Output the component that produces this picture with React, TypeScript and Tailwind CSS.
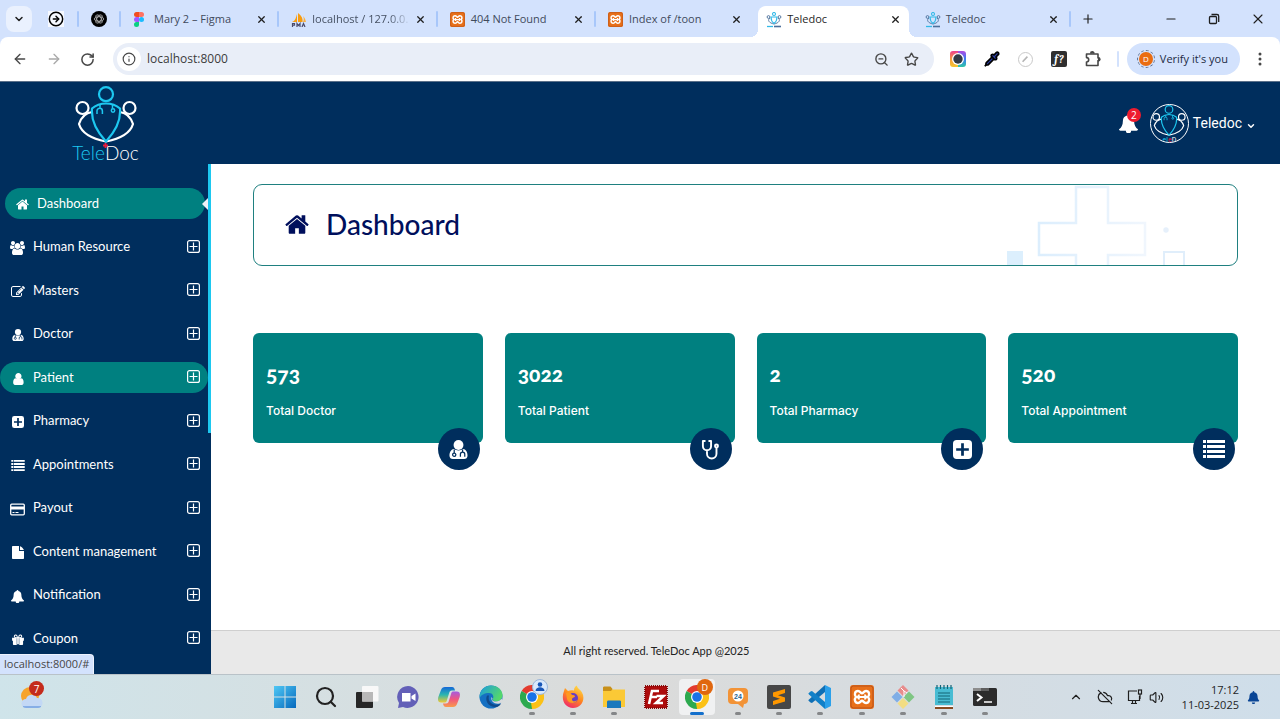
import React from "react";
import {
  ArrowLeft, ArrowRight, ChevronDown, ChevronUp, CircleArrowRight, CloudOff, Info, Minus, Plus,
  RotateCw, Search, Star, Volume2, X, ZoomOut, Pipette,
} from "lucide-react";
import { FaBell } from "react-icons/fa";

type IconProps = { className?: string };

/* ---------- dashboard icons ---------- */

const HomeIcon = ({ className }: IconProps) => (
  <svg viewBox="64 200 1664 1400" fill="currentColor" className={className} aria-hidden="true">
    <path d="M1472 992v480q0 26-19 45t-45 19h-384v-384h-256v384h-384q-26 0-45-19t-19-45v-480q0-1 .5-3t.5-3l575-474 575 474q1 2 1 6zm223-69l-62 74q-8 9-21 11h-3q-13 0-21-7l-692-577-692 577q-12 8-24 7-13-2-21-11l-62-74q-8-10-7-23.500t11-21.500l719-599q32-26 76-26t76 26l244 204v-195q0-14 9-23t23-9h192q14 0 23 9t9 23v408l219 182q10 8 11 21.500t-7 23.500z" />
  </svg>
);

const UsersIcon = ({ className }: IconProps) => (
  <svg viewBox="0 0 1920 1792" fill="currentColor" className={className} aria-hidden="true">
    <path d="M593 896q-162 5-265 128h-134q-82 0-138-40.500t-56-118.500q0-353 124-353 6 0 43.500 21t97.500 42.500 119 21.500q67 0 133-23-5 37-5 66 0 139 81 256zm1071 637q0 120-73 189.500t-194 69.500h-874q-121 0-194-69.500t-73-189.500q0-53 3.500-103.500t14-109 26.500-108.500 43-97.500 62-81 85.500-53.500 111.500-20q10 0 43 21.500t73 48 107 48 135 21.500 135-21.500 107-48 73-48 43-21.500q61 0 111.500 20t85.500 53.500 62 81 43 97.500 26.500 108.500 14 109 3.500 103.500zm-1024-1277q0 106-75 181t-181 75-181-75-75-181 75-181 181-75 181 75 75 181zm704 384q0 159-112.500 271.500t-271.500 112.500-271.500-112.500-112.500-271.500 112.500-271.500 271.500-112.500 271.500 112.500 112.500 271.500zm576 225q0 78-56 118.500t-138 40.500h-134q-103-123-265-128 81-117 81-256 0-29-5-66 66 23 133 23 59 0 119-21.500t97.500-42.500 43.500-21q124 0 124 353zm-128-609q0 106-75 181t-181 75-181-75-75-181 75-181 181-75 181 75 75 181z" />
  </svg>
);

const EditIcon = ({ className }: IconProps) => (
  <svg viewBox="0 0 1792 1792" fill="currentColor" className={className} aria-hidden="true">
    <path d="M888 1184l116-116-152-152-116 116v56h96v96h56zm440-720q-16-16-33 1l-350 350q-17 17-1 33t33-1l350-350q17-17 1-33zm80 594v190q0 119-84.500 203.500t-203.500 84.500h-832q-119 0-203.500-84.500t-84.500-203.500v-832q0-119 84.500-203.500t203.500-84.500h832q63 0 117 25 15 7 18 23 3 17-9 29l-49 49q-14 14-32 8-23-6-45-6h-832q-66 0-113 47t-47 113v832q0 66 47 113t113 47h832q66 0 113-47t47-113v-126q0-13 9-22l64-64q15-15 35-7t20 29zm-96-738l288 288-672 672h-288v-288zm444 132l-92 92-288-288 92-92q28-28 68-28t68 28l152 152q28 28 28 68t-28 68z" />
  </svg>
);

const UserIcon = ({ className }: IconProps) => (
  <svg viewBox="128 192 1440 1472" fill="currentColor" className={className} aria-hidden="true">
    <path d="M1536 1399q0 109-62.500 187t-150.500 78h-854q-88 0-150.500-78t-62.500-187q0-85 8.500-160.500t31.500-152 58.500-131 94-89 134.500-34.500q131 128 313 128t313-128q76 0 134.500 34.500t94 89 58.500 131 31.500 152 8.500 160.500zm-256-823q0 159-112.500 271.500t-271.500 112.500-271.500-112.500-112.500-271.500 112.500-271.500 271.500-112.500 271.500 112.500 112.500 271.500z" />
  </svg>
);

const DoctorIcon = ({ className }: IconProps) => (
  <svg viewBox="0 0 20 20" className={className} aria-hidden="true">
    <path d="M5 9.500C2 10 .5 13 .5 16.500.5 18.600 2 20 4 20h12c2 0 3.500-1.400 3.500-3.500 0-3.500-1.500-6.500-4.500-7-3 2-7 2-10 0z" fill="currentColor" />
    <circle cx="10" cy="5.200" r="5.200" fill="currentColor" />
    <circle cx="5.500" cy="15.500" r="1.700" fill="none" stroke="#002e5d" strokeWidth="1.300" />
    <path d="M5.500 13.800V10M14.300 10v2.500M12 17.500V15a2.300 2.300 0 0 1 4.600 0v2.500" fill="none" stroke="#002e5d" strokeWidth="1.300" />
  </svg>
);

const PlusSquareIcon = ({ className }: IconProps) => (
  <svg viewBox="0 0 18 18" className={className} aria-hidden="true">
    <path fillRule="evenodd" fill="currentColor" d="M3.500 0h11A3.500 3.500 0 0 1 18 3.500v11a3.500 3.500 0 0 1-3.500 3.500h-11A3.500 3.500 0 0 1 0 14.500v-11A3.500 3.500 0 0 1 3.500 0zM7.700 3v4.700H3v2.600h4.700V15h2.600v-4.700H15V7.700h-4.700V3z" />
  </svg>
);

const ListIcon = ({ className }: IconProps) => (
  <svg viewBox="0 0 22 18" fill="currentColor" className={className} aria-hidden="true">
    <path d="M0 0h3v3H0zM4 0h18v3H4zM0 5h3v3H0zM4 5h18v3H4zM0 10h3v3H0zM4 10h18v3H4zM0 15h3v3H0zM4 15h18v3H4z" />
  </svg>
);

const CardIcon = ({ className }: IconProps) => (
  <svg viewBox="0 0 15 13" className={className} aria-hidden="true">
    <rect x=".7" y="1.200" width="13.600" height="10.600" rx="1" fill="none" stroke="currentColor" strokeWidth="1.300" />
    <path d="M1 3.500h13v3H1zM2.500 9h2v1h-2zM5.500 9h3v1h-3z" fill="currentColor" />
  </svg>
);

const FileIcon = ({ className }: IconProps) => (
  <svg viewBox="0 0 12 13" fill="currentColor" className={className} aria-hidden="true">
    <path d="M.8 0H7v5h5v7.200c0 .5-.3.8-.8.8H.8c-.5 0-.8-.3-.8-.8V.8C0 .3.300 0 .8 0zM8 .2c1.500.5 3.500 2.300 3.900 3.800H8z" />
  </svg>
);

const BellIcon = ({ className }: IconProps) => (
  <svg viewBox="0 0 18 18" fill="currentColor" className={className} aria-hidden="true">
    <path d="M9 0c.8 0 1.300.5 1.300 1.400 2.400.5 4 2.500 4 4.900 0 4.200 1.400 6.500 3.700 8.200 0 .8-.6 1.300-1.300 1.300h-5.200a2.500 2.500 0 0 1-5 0H1.300C.6 15.800 0 15.300 0 14.500c2.300-1.700 3.700-4 3.700-8.200 0-2.400 1.600-4.400 4-4.900C7.700.5 8.200 0 9 0z" />
  </svg>
);

const GiftIcon = ({ className }: IconProps) => (
  <svg viewBox="0 0 14 13" className={className} aria-hidden="true">
    <path d="M0 4.500h5.500V8H0zM8.500 4.500H14V8H8.500zM1 8h4.500v5H2c-.6 0-1-.4-1-1zM8.500 8H13v4c0 .6-.4 1-1 1H8.500zM6 4.500h2V12H6z" fill="currentColor" />
    <path d="M6.500 4.300H4.200a1.600 1.600 0 1 1 1.300-2.600zM7.500 4.300h2.300a1.600 1.600 0 1 0-1.300-2.600z" fill="none" stroke="currentColor" strokeWidth="1.200" />
  </svg>
);

const StethoscopeIcon = ({ className }: IconProps) => (
  <svg viewBox="0 0 20 22" className={className} fill="none" stroke="currentColor" strokeWidth="2" strokeLinecap="round" strokeLinejoin="round" aria-hidden="true">
    <path d="M4 2H2v5.500a4.300 4.300 0 0 0 8.600 0V2h-2M6.300 12v3.500a5 5 0 0 0 10 0V9" />
    <circle cx="16.300" cy="7.300" r="1.600" />
  </svg>
);

const ExpandIcon = ({ className }: IconProps) => (
  <svg viewBox="0 0 13 13" className={className} fill="none" stroke="currentColor" aria-hidden="true">
    <rect x=".6" y=".6" width="11.800" height="11.800" rx="2" strokeWidth="1.200" />
    <path d="M6.500 2.500v8M2.500 6.500h8" strokeWidth="1.200" />
  </svg>
);

const LogoMark = ({ className, side = "#fff" }: IconProps & { side?: string }) => (
  <svg viewBox="0 0 62 57" className={className} fill="none" strokeWidth="2.200" aria-hidden="true">
    <g stroke={side}>
      <circle cx="7.500" cy="22" r="6" />
      <circle cx="54.500" cy="22" r="6" />
      <path d="M17 26C10 27 6 32 4 38c3 10 14 15 27 17.500C44 53 55 48 58 38c-2-6-6-11-13-12" />
    </g>
    <g stroke="#1dc8f0">
      <circle cx="31" cy="8.200" r="7" />
      <path d="M31 17.500c6 0 10 1.500 14 5C46 34 40 46 31 55.500 22 46 16 34 17 22.500c4-3.500 8-5 14-5z" />
      <path d="M25 18.500v4M22 28v-3a2.700 2.700 0 0 1 5.400 0v3M37.500 18.500v4" strokeWidth="1.500" />
      <circle cx="38" cy="24.500" r="1.700" strokeWidth="1.500" />
    </g>
  </svg>
);

/* ---------- browser icons ---------- */

const FigmaIcon = () => (
  <svg viewBox="0 0 12 18" className="h-[15px] w-3" aria-hidden="true">
    <path d="M3 0h3v6H3a3 3 0 0 1 0-6z" fill="#f24e1e" />
    <path d="M6 0h3a3 3 0 0 1 0 6H6z" fill="#ff7262" />
    <path d="M3 6h3v6H3a3 3 0 0 1 0-6z" fill="#a259ff" />
    <circle cx="9" cy="9" r="3" fill="#1abcfe" />
    <path d="M3 12h3v3a3 3 0 1 1-3-3z" fill="#0acf83" />
  </svg>
);

const PmaIcon = () => (
  <svg viewBox="0 0 16 14" className="h-[14px] w-4" aria-hidden="true">
    <path d="M6 1v8H1c3-1 4-4 5-8zM7 0c4 3 5 6 4.500 9H7z" fill="#f89c0e" />
    <path d="M12 3c1 2 1 4 0 6h3c-.5-2-1-4-3-6z" fill="#fbb040" />
    <path d="M1.500 14v-3.500h2v1.700h-2M6 14v-3.500l1.500 2 1.500-2V14M11 14l1.500-3.500L14 14" stroke="#4b4b6b" strokeWidth="1.200" fill="none" />
  </svg>
);

const XamppIcon = ({ className }: IconProps) => (
  <svg viewBox="0 0 24 24" className={className} aria-hidden="true">
    <rect width="24" height="24" rx="3" fill="#e8701a" />
    <rect x="1" y="1" width="22" height="22" rx="2.500" fill="none" stroke="#b9531a" strokeWidth="1" />
    <path d="M9 9.500c0 1.400-.5 2-1.500 2.500 1 .5 1.500 1.200 1.500 2.500M15 9.500c0 1.400.5 2 1.500 2.500-1 .5-1.500 1.200-1.500 2.500M9 12h6" stroke="#fff" strokeWidth="2" fill="none" />
    <path d="M6 12C3.800 9.500 5 6 8 6c2.500 0 2.500 2.300 4 2.300S13.500 6 16 6c3 0 4.200 3.500 2 6 2.200 2.500 1 6-2 6-2.500 0-2.500-2.300-4-2.300S10.500 18 8 18c-3 0-4.200-3.500-2-6z" fill="none" stroke="#fff" strokeWidth="2.400" />
  </svg>
);

const TeledocFavicon = () => (
  <svg viewBox="0 0 16 16" className="size-4" fill="none" aria-hidden="true">
    <g stroke="#4b6f9b" strokeWidth=".9">
      <circle cx="2.500" cy="5" r="1.400" />
      <circle cx="13.500" cy="5" r="1.400" />
      <path d="M4 6C1 8 3 11 8 12c5-1 7-4 4-6" />
    </g>
    <g stroke="#31b9e8" strokeWidth="1.100">
      <circle cx="8" cy="2" r="1.500" />
      <path d="M5 5h6c0 3-1 5-3 6.500C6 10 5 8 5 5z" />
      <path d="M1 14.500h6" strokeWidth="1.300" />
    </g>
    <path d="M8 14.500h7" stroke="#4b6f9b" strokeWidth="1.600" />
  </svg>
);

const OpenAiIcon = () => (
  <svg viewBox="0 0 16 16" className="size-4" aria-hidden="true">
    <circle cx="8" cy="8" r="8" fill="#000" />
    <g fill="none" stroke="#bbb" strokeWidth=".8">
      <ellipse cx="8" cy="8" rx="4.700" ry="2.200" />
      <ellipse cx="8" cy="8" rx="4.700" ry="2.200" transform="rotate(60 8 8)" />
      <ellipse cx="8" cy="8" rx="4.700" ry="2.200" transform="rotate(120 8 8)" />
    </g>
  </svg>
);

const RestoreIcon = () => (
  <svg viewBox="0 0 12 12" className="size-3" fill="none" stroke="currentColor" strokeWidth="1.300" aria-hidden="true">
    <rect x="1.500" y="3.500" width="7" height="7" rx="1" />
    <path d="M3.500 1.500H9A1.700 1.700 0 0 1 10.700 3.200V9" />
  </svg>
);

const ExtensionsIcon = () => (
  <svg viewBox="0 0 16 16" className="size-4" fill="none" stroke="currentColor" strokeWidth="1.600" strokeLinejoin="round" aria-hidden="true">
    <path d="M1.500 3H13v4h.500a1.300 1.300 0 0 1 0 2.600H13V14.500H1.500V11a2.200 2.200 0 0 0 0-4.400z" />
    <path d="M5.700 2.500a1.600 1.600 0 0 1 3.200 0M13 6.800a1.500 1.500 0 0 1 0 3" fill="currentColor" />
  </svg>
);

/* ---------- taskbar icons ---------- */

const TASK = "size-6";

const ChromeIcon = () => (
  <svg viewBox="0 0 24 24" className={TASK} aria-hidden="true">
    <path d="M12 12L1.600 6A12 12 0 0 1 22.400 6z" fill="#e33b2e" />
    <path d="M12 12L22.400 6A12 12 0 0 1 12 24z" fill="#fbc116" />
    <path d="M12 12v12A12 12 0 0 1 1.600 6z" fill="#2da94f" />
    <path d="M12 6h10.400L17 9z" fill="#e33b2e" />
    <path d="M17.200 15L12 24l-1-6.500z" fill="#fbc116" />
    <circle cx="12" cy="12" r="6" fill="#fff" />
    <circle cx="12" cy="12" r="4.800" fill="#1a73e8" />
  </svg>
);

const WindowsIcon = () => (
  <svg viewBox="0 0 24 24" className={TASK} aria-hidden="true">
    <defs>
      <linearGradient id="win" x1="0" y1="0" x2="1" y2="1">
        <stop stopColor="#4fc8f5" />
        <stop offset="1" stopColor="#0669bd" />
      </linearGradient>
    </defs>
    <path d="M1 1h10.500v10.500H1zM12.500 1H23v10.500H12.500zM1 12.500h10.500V23H1zM12.500 12.500H23V23H12.500z" fill="url(#win)" />
  </svg>
);

const SearchIcon = () => <Search className="size-6 text-[#222]" strokeWidth={2.2} />;

const TaskViewIcon = () => (
  <svg viewBox="0 0 24 24" className={TASK} aria-hidden="true">
    <rect x="1" y="7" width="17" height="16" rx="1" fill="#262626" />
    <rect x="7" y="1" width="16.500" height="15.500" rx="1" fill="#f8f8f8" />
    <path d="M7 7h11v9.500H7z" fill="#b8b8b8" />
  </svg>
);

const ChatIcon = () => (
  <svg viewBox="0 0 24 24" className={TASK} aria-hidden="true">
    <path d="M12 1a11 11 0 1 1-5 21l-5 1 1-5A11 11 0 0 1 12 1z" fill="#6360b8" />
    <path d="M6 8h8.500v8.500H6zM15.500 11l4-2.500v7.500l-4-2.500z" fill="#fff" />
  </svg>
);

const CopilotIcon = () => (
  <svg viewBox="0 0 24 24" className={TASK} aria-hidden="true">
    <defs>
      <linearGradient id="copA" x1="0" y1="0" x2="0" y2="1">
        <stop stopColor="#1468d8" />
        <stop offset=".5" stopColor="#2bb6b0" />
        <stop offset="1" stopColor="#f2c932" />
      </linearGradient>
      <linearGradient id="copB" x1="0" y1="0" x2="0" y2="1">
        <stop stopColor="#a45be0" />
        <stop offset=".5" stopColor="#f0567f" />
        <stop offset="1" stopColor="#f99b4b" />
      </linearGradient>
    </defs>
    <path d="M8 2h7c2 0 2.500 1.500 3 3.500h-3c-2 0-2.500 1-3 3L10 15c-.5 2-1 2.500-3 2.500H4c-3 0-3.500-3-2.500-6L4 5c.7-2 2-3 4-3z" fill="url(#copA)" />
    <path d="M16 22H9c-2 0-2.500-1.500-3-3.500h3c2 0 2.500-1 3-3L14 9c.5-2 1-2.500 3-2.500h3c3 0 3.500 3 2.500 6L20 19c-.7 2-2 3-4 3z" fill="url(#copB)" />
  </svg>
);

const EdgeIcon = () => (
  <svg viewBox="0 0 24 24" className={TASK} aria-hidden="true">
    <defs>
      <linearGradient id="edgA" x1="0" y1="0" x2="1" y2=".5">
        <stop stopColor="#1b9be0" />
        <stop offset="1" stopColor="#55d86a" />
      </linearGradient>
    </defs>
    <circle cx="12" cy="12" r="11.500" fill="#1570c2" />
    <path d="M.6 11C1.500 4.500 6 .5 12 .5c7 0 11.500 5 11.500 9.500 0 4-3 6.500-6.500 6.500-3 0-4-1.500-3-3 1-2 0-5.500-4-5.500C5.500 8 2 10 .6 13z" fill="url(#edgA)" />
    <path d="M8 10.500c-2 4 0 11.500 9 11.500 2 0 4-1.500 5-3.500-7 3.500-14-1-12-8z" fill="#114a8b" />
    <path d="M13.500 13.500c-1 1.500 0 3 3.500 3 2 0 4.500-1 5.700-3L23.500 17l-3 1.500c-5 1-9-2-8-6.500z" fill="#d9dbdd" />
  </svg>
);

const FirefoxIcon = () => (
  <svg viewBox="0 0 24 24" className={TASK} aria-hidden="true">
    <defs>
      <linearGradient id="ffx" x1=".8" y1="0" x2=".3" y2="1">
        <stop stopColor="#ffe14a" />
        <stop offset=".5" stopColor="#ff8a1e" />
        <stop offset="1" stopColor="#f0286b" />
      </linearGradient>
    </defs>
    <path d="M3 6l1-3 3 3c2-1 4-1 6-.5C13 3 14 1.500 16 .5c0 3 3 3.500 5 7 4 7-1 15.500-9 15.500S-.5 15 3 6z" fill="url(#ffx)" />
    <circle cx="12" cy="13" r="5" fill="#6a3fc0" />
    <path d="M5 8c3-1 5 0 6 2 2 0 3 .5 3 1.500-1 1.500-3 1-3 3s3 2.500 5 .5c-1 4-9 4-10-1z" fill="#ff9a20" />
  </svg>
);

const FolderIcon = () => (
  <svg viewBox="0 0 24 24" className={TASK} aria-hidden="true">
    <path d="M1 2h7l2.500 2.500H23V22H1z" fill="#fbc936" />
    <path d="M1 3c0-1 .5-1.500 1.500-1.500h6L10.500 4 9 6H1z" fill="#c8901a" />
    <path d="M5 23v-6c0-1 .5-1.500 1.500-1.500h11c1 0 1.500.5 1.500 1.500v6z" fill="#1a78bd" />
  </svg>
);

const FilezillaIcon = () => (
  <svg viewBox="0 0 24 24" className={TASK} aria-hidden="true">
    <rect x="1" y="1" width="22" height="22" fill="#ad0b0b" stroke="#8a0a0a" strokeWidth="2" strokeDasharray="1 1" />
    <path d="M5 19L8 6h7M7 12h6M12.500 11h7L12 18h7" fill="none" stroke="#fff" strokeWidth="2.600" />
  </svg>
);

const Chat24Icon = () => (
  <svg viewBox="0 0 24 24" className={TASK} aria-hidden="true">
    <path d="M6 3h12a4 4 0 0 1 4 4v8a4 4 0 0 1-4 4l-1 4-5-4H6a4 4 0 0 1-4-4V7a4 4 0 0 1 4-4z" fill="#f29337" />
    <circle cx="12" cy="11" r="5.500" fill="#fff" />
    <text x="12" y="13.500" textAnchor="middle" fontFamily="Liberation Sans, sans-serif" fontSize="7" fontWeight="700" fill="#27628f">24</text>
  </svg>
);

const SublimeIcon = () => (
  <svg viewBox="0 0 24 24" className={TASK} aria-hidden="true">
    <rect width="24" height="24" rx="2" fill="#474747" />
    <path d="M18 4v4l-7 2.200 7 2.300v4L6 20v-4l7-2.200-7-2.300v-4z" fill="#ff9800" />
  </svg>
);

const VsCodeIcon = () => (
  <svg viewBox="0 0 24 24" className={TASK} aria-hidden="true">
    <path d="M17 0v7L4 18l-1.500-.5L.3 15.500 1 14.500z" fill="#0f6fb5" />
    <path d="M17 24v-7L4 6l-1.500.5L.3 8.500 1 9.500z" fill="#1180c8" />
    <path d="M17 0l6 3v18l-6 3z" fill="#2ba0ea" />
  </svg>
);

const GitIcon = () => (
  <svg viewBox="0 0 24 24" className={TASK} aria-hidden="true">
    <path d="M12 0l5.500 5.500L12 11 6.500 5.500z" fill="#e88c8c" />
    <path d="M6 6.500l5.500 5.500L6 17.500.5 12z" fill="#80aee6" />
    <path d="M18 6.500l5.500 5.500-5.500 5.500-5.500-5.500z" fill="#7fc683" />
    <path d="M12 13l5.500 5.500L12 24l-5.500-5.500z" fill="#f2dd83" />
    <path d="M10 3l3 3v6M13 6l3 2" stroke="#fff" strokeWidth="1" fill="none" />
  </svg>
);

const NotepadIcon = () => (
  <svg viewBox="0 0 24 24" className={TASK} aria-hidden="true">
    <path d="M3 2h18v18H3z" fill="#48bcd3" />
    <path d="M3 21h18v1H3z" fill="#fff" />
    <path d="M3 22h18v2H3z" fill="#874b22" />
    <path d="M6 8h12M6 11h12M6 14h12M6 17h12" stroke="#136477" strokeWidth="1.200" />
    <path d="M5 0v4M8.500 0v4M12 0v4M15.500 0v4M19 0v4" stroke="#136477" strokeWidth="1.200" />
  </svg>
);

const TerminalIcon = () => (
  <svg viewBox="0 0 24 24" className={TASK} aria-hidden="true">
    <rect y="3" width="24" height="18" rx="1.500" fill="#2c2c2c" />
    <path d="M0 6V4.500C0 3.500.5 3 1.500 3H8v3z" fill="#8d8d8d" />
    <path d="M8 3h8v3H8z" fill="#5f5f5f" />
    <path d="M4 9l4.500 3.500L4 16" stroke="#fff" strokeWidth="2" fill="none" />
    <path d="M11 17h8" stroke="#fff" strokeWidth="1.500" />
  </svg>
);

/* ---------- data ---------- */

const tabs = [
  { title: "Mary 2 – Figma", icon: <FigmaIcon /> },
  { title: "localhost / 127.0.0.", icon: <PmaIcon />, faded: true },
  { title: "404 Not Found", icon: <XamppIcon className="size-[15px]" /> },
  { title: "Index of /toon", icon: <XamppIcon className="size-[15px]" /> },
  { title: "Teledoc", icon: <TeledocFavicon />, active: true },
  { title: "Teledoc", icon: <TeledocFavicon /> },
];

const menu = [
  { label: "Human Resource", icon: <UsersIcon className="h-[14px] w-[15px]" /> },
  { label: "Masters", icon: <EditIcon className="size-[14px]" /> },
  { label: "Doctor", icon: <DoctorIcon className="size-3" /> },
  { label: "Patient", icon: <UserIcon className="size-3" />, hovered: true },
  { label: "Pharmacy", icon: <PlusSquareIcon className="size-3" /> },
  { label: "Appointments", icon: <ListIcon className="h-[11px] w-[14px]" /> },
  { label: "Payout", icon: <CardIcon className="h-[13px] w-[15px]" /> },
  { label: "Content management", icon: <FileIcon className="h-[13px] w-3" /> },
  { label: "Notification", icon: <BellIcon className="size-[13px]" /> },
  { label: "Coupon", icon: <GiftIcon className="h-[11px] w-3" /> },
];

const stats = [
  { value: "573", label: "Total Doctor", icon: <DoctorIcon className="size-[19px]" /> },
  { value: "3022", label: "Total Patient", icon: <StethoscopeIcon className="h-[21px] w-[19px]" /> },
  { value: "2", label: "Total Pharmacy", icon: <PlusSquareIcon className="size-[19px]" /> },
  { value: "520", label: "Total Appointment", icon: <ListIcon className="h-[18px] w-[22px]" /> },
];

const apps: { name: string; icon: React.ReactNode; state?: "running" | "active" }[] = [
  { name: "Start", icon: <WindowsIcon /> },
  { name: "Search", icon: <SearchIcon /> },
  { name: "Task view", icon: <TaskViewIcon /> },
  { name: "Chat", icon: <ChatIcon /> },
  { name: "Copilot", icon: <CopilotIcon /> },
  { name: "Edge", icon: <EdgeIcon /> },
  {
    name: "Chrome",
    state: "running",
    icon: (
      <>
        <ChromeIcon />
        <svg viewBox="0 0 16 16" className="absolute top-0 left-[18px] size-4" aria-hidden="true">
          <circle cx="8" cy="8" r="7.500" fill="#d9e8fb" stroke="#9bb5d8" />
          <circle cx="8" cy="5.500" r="2.300" fill="#1856b8" />
          <path d="M3.500 12c0-5 9-5 9 0z" fill="#1856b8" />
        </svg>
      </>
    ),
  },
  { name: "Firefox", icon: <FirefoxIcon />, state: "running" },
  { name: "File Explorer", icon: <FolderIcon />, state: "running" },
  { name: "FileZilla", icon: <FilezillaIcon /> },
  {
    name: "Chrome, profile D",
    state: "active",
    icon: (
      <>
        <ChromeIcon />
        <span className="absolute top-0 left-[18px] flex size-4 items-center justify-center rounded-full bg-[#e0670f] text-[9px] leading-none text-white">D</span>
      </>
    ),
  },
  { name: "Messenger", icon: <Chat24Icon />, state: "running" },
  { name: "Sublime Text", icon: <SublimeIcon />, state: "running" },
  { name: "Visual Studio Code", icon: <VsCodeIcon />, state: "running" },
  { name: "XAMPP", icon: <XamppIcon className={TASK} />, state: "running" },
  { name: "Git", icon: <GitIcon />, state: "running" },
  { name: "Notepad", icon: <NotepadIcon />, state: "running" },
  { name: "Terminal", icon: <TerminalIcon />, state: "running" },
];

/* ---------- browser chrome ---------- */

function TabStrip() {
  return (
    <div className="flex h-[37px] shrink-0 items-stretch bg-[#d3e2fd] text-[#3f4a5c]">
      <div className="flex w-[121px] items-center">
        <button aria-label="Search tabs" className="ml-1.5 flex size-[26px] items-center justify-center rounded-lg bg-[#eaf1fe] text-[#1f1f1f]">
          <ChevronDown className="size-3" strokeWidth={3} />
        </button>
        <button aria-label="Pinned tab" className="ml-4 bg-white/80 text-black">
          <CircleArrowRight className="size-4" strokeWidth={2.2} />
        </button>
        <span className="ml-[13px] h-4 w-0.5 rounded bg-[#a8c7fa]" />
        <button aria-label="ChatGPT" className="ml-3">
          <OpenAiIcon />
        </button>
        <span className="ml-3 h-4 w-0.5 rounded bg-[#a8c7fa]" />
      </div>
      <div className="flex min-w-0 flex-1">
        {tabs.map((tab, i) => (
          <div key={i} className="relative flex min-w-0 flex-1 items-center pt-0.5 pr-3 pl-3">
            {tab.active && (
              <>
                <span className="absolute inset-x-1 top-1.5 bottom-0 rounded-t-lg bg-white" />
                <span className="absolute bottom-0 -left-1 size-2 bg-[radial-gradient(circle_at_0_0,transparent_8px,white_8px)]" />
                <span className="absolute -right-1 bottom-0 size-2 bg-[radial-gradient(circle_at_100%_0,transparent_8px,white_8px)]" />
              </>
            )}
            <a href="#" className={`relative flex min-w-0 flex-1 items-center ${tab.active ? "text-[#1f1f1f]" : ""}`}>
              <span className="flex w-4 shrink-0 items-center">{tab.icon}</span>
              <span className={`ml-[5px] text-[11px] whitespace-nowrap ${tab.faded ? "bg-linear-to-r from-[#3f4a5c] from-80% to-[#c3d0e8] bg-clip-text text-transparent" : ""}`}>
                {tab.title}
              </span>
            </a>
            <button aria-label={`Close ${tab.title}`} className="relative shrink-0 text-[#1f1f1f]">
              <X className="size-[11px]" strokeWidth={2.8} />
            </button>
            {!tab.active && i !== 3 && <span className="absolute top-[11px] right-0 h-4 w-0.5 rounded bg-[#a8c7fa]" />}
          </div>
        ))}
      </div>
      <div className="flex w-[209px] items-center pt-px text-[#1f1f1f]">
        <button aria-label="New tab" className="ml-2.5"><Plus className="size-[14px]" strokeWidth={2} /></button>
        <div className="mr-3.5 ml-auto flex items-center gap-[30px]">
          <button aria-label="Minimize"><Minus className="size-[14px]" strokeWidth={1.8} /></button>
          <button aria-label="Restore"><RestoreIcon /></button>
          <button aria-label="Close window"><X className="size-4" strokeWidth={1.6} /></button>
        </div>
      </div>
    </div>
  );
}

function Toolbar() {
  return (
    <div className="shrink-0 bg-[#d3e2fd]">
      <div className="flex h-[45px] items-center rounded-t-lg border-b border-[#5b7089] bg-white text-[#474747]">
        <div className="flex w-[113px] items-center gap-[18px] pl-3">
          <button aria-label="Back"><ArrowLeft className="size-4" strokeWidth={2} /></button>
          <button aria-label="Forward" className="text-[#a9a9a9]"><ArrowRight className="size-4" strokeWidth={2} /></button>
          <button aria-label="Reload"><RotateCw className="size-[15px]" strokeWidth={2.4} /></button>
        </div>
        <div className="flex h-8 min-w-0 flex-1 items-center rounded-full bg-[#e9eef8] pr-[15px] pl-1">
          <button aria-label="Site information" className="flex size-6 items-center justify-center rounded-full bg-white">
            <Info className="size-[14px]" strokeWidth={2} />
          </button>
          <input aria-label="Address" defaultValue="localhost:8000" className="ml-1.5 min-w-0 flex-1 bg-transparent text-xs text-[#3c3c3c] outline-none" />
          <button aria-label="Zoom"><ZoomOut className="size-[15px]" strokeWidth={2.2} /></button>
          <button aria-label="Bookmark" className="ml-[15px]"><Star className="size-[15px]" strokeWidth={2.2} /></button>
        </div>
        <div className="ml-4 flex items-center gap-[18px]">
          <button aria-label="Camera extension">
            <svg viewBox="0 0 16 16" className="size-4" aria-hidden="true">
              <defs>
                <linearGradient id="cam" x1="0" y1="0" x2="0" y2="1">
                  <stop stopColor="#ef3f8f" /><stop offset=".5" stopColor="#f59a3c" /><stop offset="1" stopColor="#f7c531" />
                </linearGradient>
                <linearGradient id="camRight" x1="0" y1="0" x2="0" y2="1">
                  <stop stopColor="#b04be0" /><stop offset=".5" stopColor="#3a7cf4" /><stop offset="1" stopColor="#2fc6a4" />
                </linearGradient>
              </defs>
              <path d="M3 0h5v16H3a3 3 0 0 1-3-3V3a3 3 0 0 1 3-3z" fill="url(#cam)" />
              <path d="M8 0h5a3 3 0 0 1 3 3v10a3 3 0 0 1-3 3H8z" fill="url(#camRight)" />
              <circle cx="8" cy="8" r="6" fill="#fff" />
              <circle cx="8" cy="8" r="4.700" fill="#333a45" />
            </svg>
          </button>
          <button aria-label="Color picker"><Pipette className="size-4 text-black" fill="#2d3fa0" strokeWidth={2.6} /></button>
          <button aria-label="Editor extension" className="flex size-[15px] items-center justify-center rounded-full border border-[#c9c9c9] text-[#b5b5b5]">
            <svg viewBox="0 0 10 10" className="size-2" aria-hidden="true"><path d="M2 8.500L8 2" stroke="currentColor" strokeWidth="2" /></svg>
          </button>
          <button aria-label="Font finder" className="flex size-4 items-center justify-center rounded-xs bg-[#2f2f2f] font-serif text-[11px] leading-none font-bold text-white italic">f?</button>
          <button aria-label="Extensions"><ExtensionsIcon /></button>
        </div>
        <span className="ml-4 h-4 w-0.5 rounded bg-[#d3e2fd]" />
        <button className="ml-2 flex h-8 items-center rounded-full bg-[#d3e2fd] pr-3 pl-2.5 text-[11px] text-[#1d2b44]">
          <span className="mr-[5px] flex size-[18px] items-center justify-center rounded-full border border-dashed border-[#5d6f8f]">
            <span className="flex size-[14px] items-center justify-center rounded-full bg-[#ea6d12] text-[8px] text-white">D</span>
          </span>
          Verify it's you
        </button>
        <button aria-label="Menu" className="mr-[18px] ml-[18px]">
          <svg viewBox="0 0 4 16" className="h-4 w-1" fill="currentColor" aria-hidden="true">
            <circle cx="2" cy="3" r="1.500" /><circle cx="2" cy="8" r="1.500" /><circle cx="2" cy="13" r="1.500" />
          </svg>
        </button>
      </div>
    </div>
  );
}

/* ---------- application ---------- */

function Header() {
  return (
    <header className="flex h-[82px] shrink-0 items-center bg-[#002e5d] text-white">
      <a href="#" className="flex w-[211px] flex-col items-center pt-0.5">
        <LogoMark className="h-[57px] w-[62px]" />
        <span className="relative flex font-[Lato] text-[19px] leading-5 font-light">
          <span className="text-[#1dc8f0]">Tele</span>
          <span>Doc</span>
          <svg viewBox="0 0 5 5" className="absolute top-0 left-[31px] size-[5px]" aria-hidden="true">
            <path d="M2.500 0v5M0 2.500h5" stroke="#ed1c3c" strokeWidth="1.800" />
          </svg>
        </span>
      </a>
      <div className="mr-6 ml-auto flex items-center">
        <button aria-label="Notifications" className="relative mr-3">
          <BellIcon className="size-[19px]" />
          <span className="absolute -top-1.5 left-2 flex size-[14px] items-center justify-center rounded-full bg-[#ee1c2e] text-[10px] leading-none">2</span>
        </button>
        <button className="flex items-center font-[Roboto] text-sm">
          <span className="mr-1 flex size-[39px] flex-col items-center overflow-hidden rounded-full border border-white">
            <LogoMark className="h-[31px] w-[34px] shrink-0" />
            <span className="text-[7px] leading-2 text-[#1dc8f0]">el<span className="text-[#ed1c3c]">e</span><span className="text-white">D</span></span>
          </span>
          Teledoc
          <ChevronDown className="mt-1.5 ml-1 size-[10px]" strokeWidth={3.5} />
        </button>
      </div>
    </header>
  );
}

function Sidebar() {
  return (
    <aside className="relative flex w-[211px] shrink-0 flex-col bg-[#002e5d] font-[Lato] text-[13px] text-white">
      <nav className="flex flex-1 flex-col justify-between pt-6 pr-[3px] pb-5">
        <a href="#" className="relative mr-[3px] ml-[5px] flex h-[31px] items-center rounded-full bg-[#008080] pl-[11px]">
          <span className="flex w-[21px] pt-0.5"><HomeIcon className="h-[11px] w-[13px]" /></span>
          Dashboard
          <span className="absolute top-2.5 -right-[3px] border-y-[6px] border-r-[6px] border-y-transparent border-r-[#eef2f6]" />
        </a>
        {menu.map((item) => (
          <a key={item.label} href="#" className={`flex h-[31px] items-center rounded-full pr-2 pl-2.5 ${item.hovered ? "bg-[#008080]" : ""}`}>
            <span className="mr-2 flex w-[15px] justify-center pt-0.5">{item.icon}</span>
            <span className="flex-1">{item.label}</span>
            <ExpandIcon className="mb-0.5 size-[13px]" />
          </a>
        ))}
      </nav>
      <span className="absolute top-0 right-0 h-[269px] w-[3px] bg-[#1dc8f0]" />
      <span className="absolute bottom-0 left-0 flex h-5 items-center rounded-tr border-t border-r border-white/60 bg-[#d3e2fd] px-1 font-[Open_Sans] text-[11px] text-[#474747]">
        localhost:8000/#
      </span>
    </aside>
  );
}

function Banner() {
  return (
    <section className="relative flex h-[82px] items-center overflow-hidden rounded-[9px] border border-[#1f8080] px-[31px] pb-0.5 text-[#000f5c]">
      <HomeIcon className="h-[21px] w-[24px]" />
      <h1 className="ml-[17px] font-[Lato] text-[28px] font-medium">Dashboard</h1>
      <svg viewBox="0 0 230 80" className="absolute top-0 right-0 h-20 w-[230px]" fill="none" aria-hidden="true">
        <defs>
          <linearGradient id="crs" x1="0" y1="0" x2="1" y2="0">
            <stop stopColor="#dceefd" />
            <stop offset="1" stopColor="#f0f6fd" />
          </linearGradient>
        </defs>
        <rect y="66" width="16" height="14" fill="#dceffd" />
        <path d="M69 80V70H32V38h37V2h32v36h37v32h-37v10" stroke="url(#crs)" strokeWidth="2.500" />
        <circle cx="159" cy="45" r="2.700" fill="#e6f0fb" />
        <path d="M157 80V67h20v13" stroke="#e0eefb" strokeWidth="2" />
      </svg>
    </section>
  );
}

function Dashboard() {
  return (
    <div className="flex min-w-0 flex-1 flex-col bg-white">
      <main className="flex-1 px-[42px] pt-5">
        <Banner />
        <div className="mt-[67px] grid grid-cols-4 gap-[22px]">
          {stats.map((s) => (
            <article key={s.label} className="relative h-[110px] rounded-md bg-[#008080] px-[13px] pt-[26px] text-white">
              <p className="font-[Lato] text-[21px] leading-[30px] font-black [font-variant-numeric:oldstyle-nums]">{s.value}</p>
              <h2 className="mt-3 font-[Inter] text-xs leading-5 font-medium">{s.label}</h2>
              <span className="absolute right-[3px] -bottom-[27px] flex size-[42px] items-center justify-center rounded-full bg-[#002e5d]">
                {s.icon}
              </span>
            </article>
          ))}
        </div>
      </main>
      <footer className="flex h-11 items-center border-t border-[#cfcfcf] bg-[#e9e9e9] pb-0.5">
        <p className="w-5/6 text-center font-[Lato] text-[11px] text-[#222]">All right reserved. TeleDoc App @2025</p>
      </footer>
    </div>
  );
}

function Taskbar() {
  return (
    <div className="grid h-[45px] shrink-0 grid-cols-[264px_minmax(0,742px)_1fr] border-t border-[#b9c2c8] bg-linear-to-r from-[#cfe4ea] via-[#dbdbda] to-[#cfdeea] text-[#1f1f1f]">
      <div className="flex items-center pl-5">
        <button aria-label="Weather" className="relative">
          <svg viewBox="0 0 24 24" className="size-6" aria-hidden="true">
            <circle cx="10" cy="11" r="9" fill="#f6a32a" />
            <path d="M6 23a4.500 4.500 0 0 1 0-9 6 6 0 0 1 11-1 5 5 0 0 1 1 10z" fill="#c3d8f5" />
            <path d="M3 21h18v1c-1 .7-2 1-3 1H6c-1 0-2-.4-3-1z" fill="#86aee6" />
          </svg>
          <span className="absolute -top-1 left-[9px] flex size-[15px] items-center justify-center rounded-full bg-[#c42b1c] text-[10px] leading-none text-white">7</span>
        </button>
      </div>
      <div className="flex">
        {apps.map((app) => (
          <div key={app.name} className="flex flex-1 justify-center py-1">
            <button aria-label={app.name} className={`relative flex w-9 items-center justify-center rounded ${app.state === "active" ? "bg-[#f0f1f2]" : ""}`}>
              {app.icon}
              {app.state === "running" && <span className="absolute bottom-0 h-[3px] w-1.5 rounded-full bg-[#848688]" />}
              {app.state === "active" && <span className="absolute bottom-0 h-[3px] w-3.5 rounded-full bg-[#1470cc]" />}
            </button>
          </div>
        ))}
      </div>
      <div className="flex items-center justify-end pr-5">
        <button aria-label="Show hidden icons"><ChevronUp className="size-[14px]" strokeWidth={2} /></button>
        <CloudOff className="ml-3.5 size-4" strokeWidth={1.8} />
        <svg viewBox="0 0 16 16" className="ml-3.5 size-4" fill="none" stroke="currentColor" strokeWidth="1.200" aria-hidden="true">
          <path d="M10 2H1.500v9.500h11V7M4 14.500h6M5.500 11.500v3M8.500 11.500v3M13 5v5" />
          <rect x="11.500" y="1" width="3" height="4" />
        </svg>
        <Volume2 className="ml-1.5 size-[15px]" strokeWidth={1.8} />
        <div className="ml-[18px] text-right text-[11px] leading-[15px]">
          <div>17:12</div>
          <div>11-03-2025</div>
        </div>
        <FaBell className="ml-2 size-[13px] text-[#0a4595]" aria-label="Notifications" />
      </div>
    </div>
  );
}

export default function App() {
  return (
    <div className="flex h-screen min-h-[640px] flex-col overflow-hidden font-[Open_Sans,sans-serif]">
      <TabStrip />
      <Toolbar />
      <Header />
      <div className="flex min-h-0 flex-1">
        <Sidebar />
        <Dashboard />
      </div>
      <Taskbar />
    </div>
  );
}
